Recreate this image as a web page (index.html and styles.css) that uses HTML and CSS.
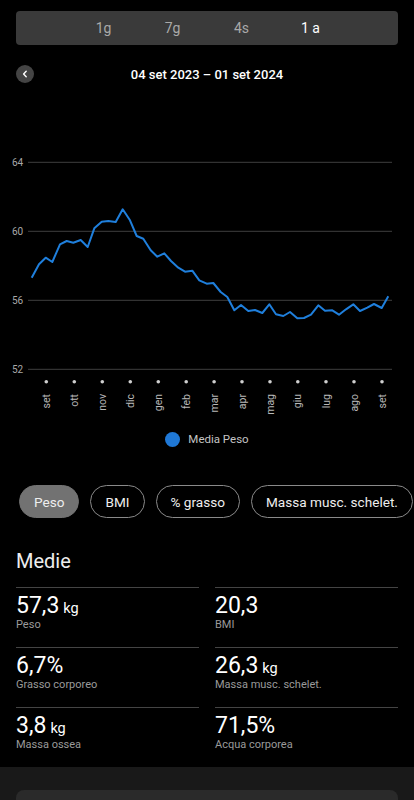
FILE: index.html
```html
<!DOCTYPE html>
<html lang="it">
<head>
    <meta charset="UTF-8">
    <meta name="viewport" content="width=device-width, initial-scale=1.0">
    <title>Peso - 1 anno</title>
    <link rel="stylesheet" href="styles.css">
</head>
<body>
    <nav class="range-tabs">
        <span class="range-tab">1g</span>
        <span class="range-tab">7g</span>
        <span class="range-tab">4s</span>
        <span class="range-tab active">1 a</span>
    </nav>

    <div class="date-row">
        <button class="back-btn" aria-label="Indietro">
            <svg width="8" height="8" viewBox="0 0 8 8"><path d="M5.2 1.2 L2.6 4 L5.2 6.8" fill="none" stroke="#fff" stroke-width="1.4" stroke-linecap="round" stroke-linejoin="round"/></svg>
        </button>
        <span class="date-range">04 set 2023 – 01 set 2024</span>
        <span class="date-spacer"></span>
    </div>

    <svg class="chart" width="414" height="320" viewBox="0 0 414 320">
        <g class="grid">
            <line x1="28" y1="61.3" x2="392" y2="61.3"/>
            <line x1="28" y1="130.3" x2="392" y2="130.3"/>
            <line x1="28" y1="199.3" x2="392" y2="199.3"/>
            <line x1="28" y1="268.3" x2="392" y2="268.3"/>
        </g>
        <g class="y-labels">
            <text x="12" y="61.3">64</text>
            <text x="12" y="130.3">60</text>
            <text x="12" y="199.3">56</text>
            <text x="12" y="268.3">52</text>
        </g>
        <polyline class="line" points="31.7,176.7 39,163.3 45.7,156.7 52.3,161 60,143.3 66.7,140 73.3,141.7 80.7,139 87.7,146 94.3,127.3 101.7,120.7 108.3,120 115.7,121 122.7,108.3 130,119.3 136.7,135 143.3,137.7 150.7,149.3 157.3,155.7 164.3,152.3 171,160 178.3,166.7 185,170.7 192.3,169.7 199.3,179.3 206.7,182.7 213.3,182 220.7,191 227.3,196 234.3,209.3 241,204 248.3,210 255,209 262.3,212 269.3,203.3 276,213.3 283.3,215 290,211 297.3,217.3 304,217 311,213.7 318.3,204.3 325,209.7 332.3,209.3 339,213.7 346,208.3 353.3,203.3 360,210 367.3,206.7 374,203 381.7,207 388.3,195.3"/>
        <g class="ticks">
            <circle cx="46.3" cy="280.7" r="1.8"/>
            <circle cx="74.3" cy="280.7" r="1.8"/>
            <circle cx="102.3" cy="280.7" r="1.8"/>
            <circle cx="130.3" cy="280.7" r="1.8"/>
            <circle cx="158.3" cy="280.7" r="1.8"/>
            <circle cx="186.2" cy="280.7" r="1.8"/>
            <circle cx="214.1" cy="280.7" r="1.8"/>
            <circle cx="242" cy="280.7" r="1.8"/>
            <circle cx="270" cy="280.7" r="1.8"/>
            <circle cx="297.8" cy="280.7" r="1.8"/>
            <circle cx="326" cy="280.7" r="1.8"/>
            <circle cx="354" cy="280.7" r="1.8"/>
            <circle cx="382" cy="280.7" r="1.8"/>
        </g>
        <g class="x-labels">
            <text transform="translate(46.3 293) rotate(-90)">set</text>
            <text transform="translate(74.3 293) rotate(-90)">ott</text>
            <text transform="translate(102.3 293) rotate(-90)">nov</text>
            <text transform="translate(130.3 293) rotate(-90)">dic</text>
            <text transform="translate(158.3 293) rotate(-90)">gen</text>
            <text transform="translate(186.2 293) rotate(-90)">feb</text>
            <text transform="translate(214.1 293) rotate(-90)">mar</text>
            <text transform="translate(242 293) rotate(-90)">apr</text>
            <text transform="translate(270 293) rotate(-90)">mag</text>
            <text transform="translate(297.8 293) rotate(-90)">giu</text>
            <text transform="translate(326 293) rotate(-90)">lug</text>
            <text transform="translate(354 293) rotate(-90)">ago</text>
            <text transform="translate(382 293) rotate(-90)">set</text>
        </g>
    </svg>

    <div class="legend">
        <span class="legend-dot"></span>
        <span class="legend-text">Media Peso</span>
    </div>

    <div class="chips">
        <span class="chip active">Peso</span>
        <span class="chip">BMI</span>
        <span class="chip">% grasso</span>
        <span class="chip">Massa musc. schelet.</span>
    </div>

    <h2 class="section-title">Medie</h2>

    <section class="stats">
        <div class="stat">
            <div class="stat-value">57,3<span class="unit">kg</span></div>
            <div class="stat-label">Peso</div>
        </div>
        <div class="stat">
            <div class="stat-value">20,3</div>
            <div class="stat-label">BMI</div>
        </div>
        <div class="stat">
            <div class="stat-value">6,7%</div>
            <div class="stat-label">Grasso corporeo</div>
        </div>
        <div class="stat">
            <div class="stat-value">26,3<span class="unit">kg</span></div>
            <div class="stat-label">Massa musc. schelet.</div>
        </div>
        <div class="stat">
            <div class="stat-value">3,8<span class="unit">kg</span></div>
            <div class="stat-label">Massa ossea</div>
        </div>
        <div class="stat">
            <div class="stat-value">71,5%</div>
            <div class="stat-label">Acqua corporea</div>
        </div>
    </section>

    <footer class="bottom-panel">
        <div class="bottom-card"></div>
    </footer>
</body>
</html>
```

FILE: styles.css
```css
body {
    font-family: Roboto, "Noto Sans", sans-serif;
    margin: 0;
    padding: 0;
    background: #000;
    color: #fff;
    height: 800px;
    overflow: hidden;
}
.range-tabs {
    display: flex;
    justify-content: center;
    align-items: center;
    height: 34px;
    margin: 11px 16px 0;
    background: #3a3a3a;
    border-radius: 4px;
}
.range-tab {
    width: 69px;
    text-align: center;
    font-size: 14px;
    color: #a9a9a9;
}
.range-tab.active {
    color: #fff;
}
.date-row {
    display: flex;
    align-items: center;
    height: 20px;
    margin: 19px 16px 0;
}
.back-btn {
    width: 18px;
    height: 18px;
    padding: 0;
    border: none;
    border-radius: 50%;
    background: #444;
    display: flex;
    align-items: center;
    justify-content: center;
}
.date-spacer {
    width: 18px;
}
.date-range {
    flex: 1;
    text-align: center;
    font-size: 13px;
    font-weight: 500;
}
.chart {
    display: block;
    margin-top: 17px;
}
.grid line {
    stroke: #3f3f3f;
    stroke-width: 1;
}
.y-labels text {
    font-size: 10px;
    fill: #a8a8a8;
    dominant-baseline: central;
}
.line {
    fill: none;
    stroke: #1f7fdc;
    stroke-width: 2;
    stroke-linejoin: round;
}
.ticks circle {
    fill: #cfcfcf;
}
.x-labels text {
    font-size: 10.5px;
    fill: #b8b8b8;
    text-anchor: end;
    dominant-baseline: central;
}
.legend {
    display: flex;
    justify-content: center;
    align-items: center;
    gap: 8px;
    height: 16px;
    margin-top: 10px;
}
.legend-dot {
    width: 15px;
    height: 15px;
    border-radius: 50%;
    background: #1f78d6;
}
.legend-text {
    font-size: 11.5px;
    color: #c4c4c4;
}
.chips {
    display: flex;
    gap: 11px;
    margin-top: 38px;
    padding-left: 19px;
}
.chip {
    flex-shrink: 0;
    display: flex;
    align-items: center;
    height: 31px;
    padding: 0 14px;
    border: 1px solid #8a8a8a;
    border-radius: 17px;
    font-size: 13.6px;
    color: #eee;
    white-space: nowrap;
}
.chip.active {
    background: #727272;
    border-color: #727272;
}
.section-title {
    margin: 31px 16px 14px;
    font-size: 20px;
    line-height: 24px;
    font-weight: 400;
    color: #eee;
}
.stats {
    display: grid;
    grid-template-columns: 1fr 1fr;
    column-gap: 16px;
    padding: 0 16px;
}
.stat {
    border-top: 1px solid #444;
    padding: 6px 0 15px;
}
.stat-value {
    font-size: 23px;
    line-height: 24px;
    height: 24px;
    color: #fff;
}
.unit {
    font-size: 14.5px;
    line-height: 0;
    margin-left: 4px;
}
.stat-label {
    font-size: 11px;
    line-height: 14px;
    color: #9a9a9a;
}
.bottom-panel {
    background: #191919;
    padding-top: 23px;
    height: 11px;
    overflow: hidden;
}
.bottom-card {
    height: 40px;
    margin: 0 16px;
    background: #2a2a2a;
    border-radius: 8px;
}
```
